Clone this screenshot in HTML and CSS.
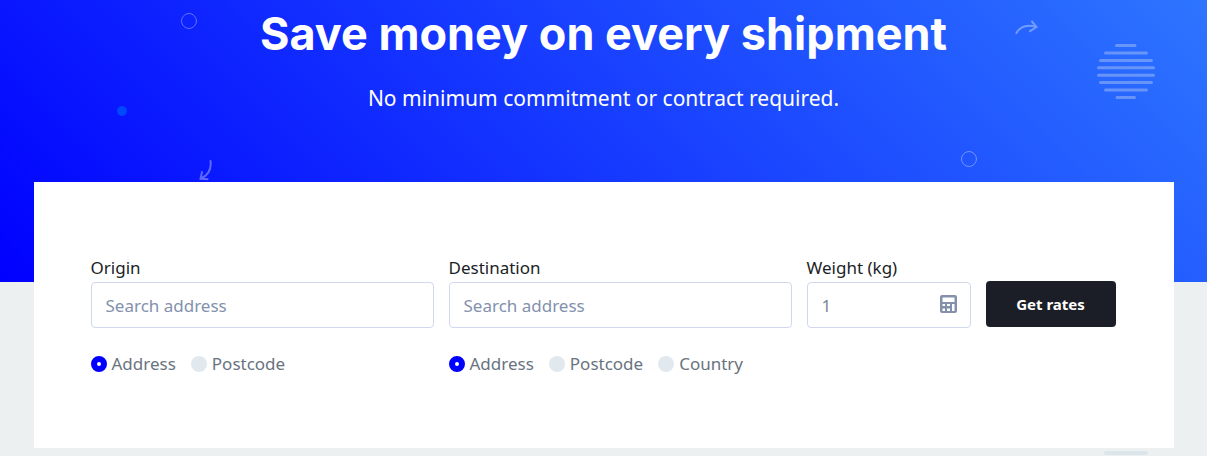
FILE: index.html
```html
<!DOCTYPE html>
<html lang="en">
<head>
  <meta charset="UTF-8" />
  <meta name="viewport" content="width=device-width, initial-scale=1.0"/>
  <title>Save money on every shipment</title>
  <link rel="stylesheet" href="styles.css">
</head>
<body>

  <section class="hero">
    <!-- background shapes -->
    <svg class="shape ring-left" width="18" height="18" viewBox="0 0 18 18"><circle cx="9" cy="9" r="7.5"/></svg>
    <svg class="shape ring-right" width="18" height="18" viewBox="0 0 18 18"><circle cx="9" cy="9" r="7.5"/></svg>
    <span class="shape dot"></span>
    <svg class="shape arrow-down" width="14" height="22" viewBox="0 0 14 22">
      <path d="M11.500 1C12.500 9 10 15 2 18.500"/>
      <path d="M3 12L1.500 18.800L8.500 19.300"/>
    </svg>
    <svg class="shape arrow-right" width="24" height="16" viewBox="0 0 24 16">
      <path d="M2.500 13C6 6.500 13 4.500 21.500 6.500"/>
      <path d="M18 1.500L22.500 7L16 11.200"/>
    </svg>
    <svg class="shape lines" width="58" height="56" viewBox="0 0 58 56">
      <path d="M19.500 1.500H38M8.500 9H49.500M3.500 16.500H54.500M1.500 23.800H56.500M1.500 31.300H56.500M3.500 38.500H54.500M8.500 46H49.500M20 53.500H37.500"/>
    </svg>

    <h1>Save money on every shipment</h1>
    <p>No minimum commitment or contract required.</p>
  </section>

  <main class="rates">
    <form class="rates-card" id="rates-form">
      <div class="field">
        <label for="origin">Origin</label>
        <input type="text" id="origin" name="origin" placeholder="Search address">
        <div class="options">
          <label><input type="radio" name="originType" value="address" checked>Address</label>
          <label><input type="radio" name="originType" value="postcode">Postcode</label>
        </div>
      </div>

      <div class="field">
        <label for="destination">Destination</label>
        <input type="text" id="destination" name="destination" placeholder="Search address">
        <div class="options">
          <label><input type="radio" name="destinationType" value="address" checked>Address</label>
          <label><input type="radio" name="destinationType" value="postcode">Postcode</label>
          <label><input type="radio" name="destinationType" value="country">Country</label>
        </div>
      </div>

      <div class="field">
        <label for="weight">Weight (kg)</label>
        <div class="input-icon">
          <input type="text" id="weight" name="weight" value="1">
          <svg width="17" height="18" viewBox="0 0 17 18">
            <path fill-rule="evenodd" d="M2 0H15Q17 0 17 2V16Q17 18 15 18H2Q0 18 0 16V2Q0 0 2 0ZM2.500 2.500V7H14.500V2.500ZM2.500 9V11H5V9ZM7 9V11H10V9ZM2.500 13.500V16H5V13.500ZM7 13.500V16H10V13.500ZM12 9V16H14.500V9Z"/>
          </svg>
        </div>
      </div>

      <button type="submit">Get rates</button>
    </form>
    <span class="next-shape"></span>
  </main>

</body>
</html>
```
FILE: styles.css
```css
* {
  margin: 0;
  padding: 0;
  box-sizing: border-box;
}

body {
  background: #ecf0f1;
  font-family: 'Noto Sans', 'Open Sans', sans-serif;
  font-size: 17px;
  color: #1b1e26;
}

.hero {
  position: relative;
  height: 282px;
  padding: 4px 20px 0;
  background: linear-gradient(45deg, #0000ff, #2d75ff);
  color: #ffffff;
  text-align: center;
}

.hero h1 {
  font-family: Inter, sans-serif;
  font-size: 45px;
  font-weight: 700;
  line-height: 60px;
}

.hero p {
  margin-top: 19px;
  font-size: 21px;
  line-height: 30px;
}

/* decorative shapes */
.shape {
  position: absolute;
  fill: none;
  stroke: #ffffff;
  stroke-width: 2;
  stroke-linecap: round;
  opacity: 0.35;
}

.ring-left {
  top: 12px;
  left: 180px;
  stroke-width: 1;
}

.ring-right {
  top: 150px;
  right: 229px;
  stroke-width: 1;
}

.dot {
  top: 106px;
  left: 117px;
  width: 10px;
  height: 10px;
  border-radius: 50%;
  background: #0048ff;
  opacity: 1;
}

.arrow-down {
  top: 160px;
  left: 199px;
}

.arrow-right {
  top: 20px;
  right: 169px;
}

.lines {
  top: 44px;
  right: 52px;
  stroke-width: 3;
  stroke: #dfe6ee;
}

.rates {
  position: relative;
  padding: 0 20px 8px;
}

.rates-card {
  position: relative;
  display: grid;
  grid-template-columns: minmax(0, 1fr) minmax(0, 1fr) 164px 130px;
  gap: 15px;
  align-items: start;
  max-width: 1140px;
  margin: -100px auto 0;
  padding: 74px 58px 70px 57px;
  background: #ffffff;
}

.field > label {
  display: block;
  margin-bottom: 2px;
  line-height: 24px;
}

.field input[type="text"] {
  display: block;
  width: 100%;
  height: 46px;
  padding: 0 14px;
  border: 1px solid #d0d8ee;
  border-radius: 4px;
  background: #ffffff;
  font-family: inherit;
  font-size: 17px;
  color: #7b8794;
}

.field input::placeholder {
  color: #8391ad;
  opacity: 1;
}

.options {
  display: flex;
  gap: 15px;
  margin-top: 22px;
}

.options label {
  display: flex;
  align-items: center;
  gap: 5px;
  line-height: 28px;
  color: #697380;
}

.options input {
  appearance: none;
  width: 16px;
  height: 16px;
  border-radius: 50%;
  background: #e2e9ee;
}

.options input:checked {
  background: #ffffff;
  border: 6px solid #0000ff;
}

.input-icon {
  position: relative;
}

.input-icon svg {
  position: absolute;
  top: 13px;
  right: 14px;
  fill: #8391ad;
}

button {
  height: 46px;
  margin-top: 25px;
  border: none;
  border-radius: 4px;
  background: #1b1e26;
  color: #ffffff;
  font-family: inherit;
  font-size: 15px;
  font-weight: bold;
  cursor: pointer;
}

.next-shape {
  position: absolute;
  right: 59px;
  bottom: 1px;
  width: 44px;
  height: 4px;
  border-radius: 2px;
  background: #dce5ea;
}
```
